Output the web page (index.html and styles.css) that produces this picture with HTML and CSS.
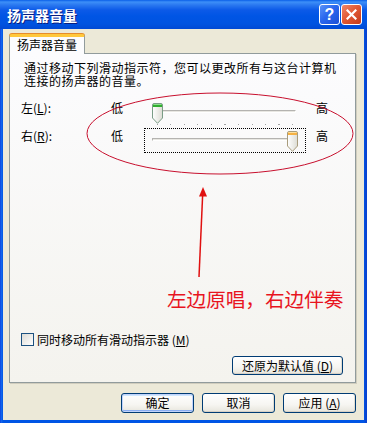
FILE: index.html
```html
<!DOCTYPE html>
<html lang="zh-CN">
<head>
<meta charset="utf-8">
<title>扬声器音量</title>
<link rel="stylesheet" href="styles.css">
</head>
<body>
<div class="window">
  <div class="titlebar">
    <span class="title">扬声器音量</span>
    <div class="tb-buttons">
      <span class="tb-btn help">?</span>
      <span class="tb-btn close">
        <svg width="11" height="11" viewBox="0 0 11 11"><path d="M1.5 1.5 L9.5 9.5 M9.5 1.5 L1.5 9.5" stroke="#fff" stroke-width="2.2" stroke-linecap="square"/></svg>
      </span>
    </div>
  </div>
  <div class="client">
    <div class="tabs"><div class="tab">扬声器音量</div></div>
    <div class="panel">
      <p class="desc">通过移动下列滑动指示符，您可以更改所有与这台计算机<br>连接的扬声器的音量。</p>
      <div class="rows">
        <div class="row">
          <span class="lbl">左(<u>L</u>):</span>
          <span class="low">低</span>
          <div class="slider">
            <div class="track"></div>
            <div class="ticks"></div>
            <svg class="thumb thumb-left" width="11" height="21" viewBox="0 0 11 21">
              <defs><linearGradient id="tg1" x1="0" y1="0" x2="1" y2="0"><stop offset="0" stop-color="#FFFFFF"/><stop offset="1" stop-color="#DCDCD4"/></linearGradient></defs>
              <path d="M0.5 2 Q0.5 0.5 2 0.5 H9 Q10.5 0.5 10.5 2 V15 L5.5 20.3 L0.5 15 Z" fill="url(#tg1)" stroke="#7A9C86"/>
              <path d="M1 2 Q1 1 2 1 H9 Q10 1 10 2 V4 H1 Z" fill="#2FAE2F"/>
              <path d="M1.5 1.5 H9.5" stroke="#8EE08E"/>
            </svg>
          </div>
          <span class="high">高</span>
        </div>
        <div class="row">
          <span class="lbl">右(<u>R</u>):</span>
          <span class="low">低</span>
          <div class="slider focus">
            <div class="track"></div>
            <svg class="thumb thumb-right" width="11" height="21" viewBox="0 0 11 21">
              <defs><linearGradient id="tg2" x1="0" y1="0" x2="1" y2="0"><stop offset="0" stop-color="#FFFFFF"/><stop offset="1" stop-color="#DCDCD4"/></linearGradient></defs>
              <path d="M0.5 2 Q0.5 0.5 2 0.5 H9 Q10.5 0.5 10.5 2 V15 L5.5 20.3 L0.5 15 Z" fill="url(#tg2)" stroke="#A89C7C"/>
              <path d="M1 2 Q1 1 2 1 H9 Q10 1 10 2 V4 H1 Z" fill="#F5B143"/>
              <path d="M1.5 1.5 H9.5" stroke="#FCE0A0"/>
            </svg>
          </div>
          <span class="high">高</span>
        </div>
      </div>
      <label class="check"><span class="box"></span><span>同时移动所有滑动指示器 (<u>M</u>)</span></label>
      <div class="restore-row"><span class="btn restore">还原为默认值 (<u>D</u>)</span></div>

      <svg class="annot" width="345" height="328" viewBox="0 0 345 328">
        <ellipse cx="210" cy="79.5" rx="133" ry="40.5" fill="none" stroke="#C8102E" stroke-width="1"/>
        <path d="M189 223 L192.6 142" stroke="#E01010" stroke-width="1.5" fill="none"/>
        <path d="M193 133 L189 142.5 L197 142.5 Z" fill="#E01010"/>
      </svg>
      <div class="annot-text">左边原唱，右边伴奏</div>
    </div>
    <div class="footer">
      <span class="btn default">确定</span>
      <span class="btn">取消</span>
      <span class="btn">应用 (<u>A</u>)</span>
    </div>
  </div>
</div>
</body>
</html>
```
FILE: styles.css
```css
* { box-sizing: border-box; margin: 0; padding: 0; }
html, body { width: 367px; height: 423px; overflow: hidden; }
body {
  font-family: "Noto Sans CJK SC", "Liberation Sans", sans-serif;
  font-size: 12px;
  color: #000;
  background: #fff;
}
u { text-decoration: underline; text-underline-offset: 1px; }

.window {
  width: 367px;
  height: 423px;
  display: flex;
  flex-direction: column;
  background: linear-gradient(to right, #0831D9 0, #166AEE 1px, #0055E5 3px, #0055E5 364px, #0842D0 366px);
}

.titlebar {
  height: 29px;
  display: flex;
  align-items: center;
  padding: 0 5px 0 7px;
  background: linear-gradient(#0A5FE8 0, #3D8FF8 2px, #2A78F0 5px, #0C5AE8 10px, #0055E5 16px, #0053E0 24px, #0049D4 29px);
}
.title {
  flex: 1;
  color: #fff;
  font-weight: bold;
  font-size: 14px;
  line-height: 16px;
  text-shadow: 1px 1px 0 #0A1E80;
  padding-top: 1px;
}
.tb-buttons { display: flex; gap: 1px; }
.tb-btn {
  width: 21px;
  height: 21px;
  border: 1px solid #fff;
  border-radius: 3px;
  display: flex;
  align-items: center;
  justify-content: center;
}
.help {
  background: linear-gradient(135deg, #5A93F8 0%, #2A67EE 45%, #1A4FD6 100%);
  color: #fff;
  font-family: "Liberation Sans", sans-serif;
  font-weight: bold;
  font-size: 16px;
  line-height: 16px;
}
.close {
  background: linear-gradient(135deg, #F0876A 0%, #E25A35 45%, #C4391A 100%);
}

.client {
  flex: 1;
  margin: 0 3px 3px 3px;
  background: #ECE9D8;
  display: flex;
  flex-direction: column;
}

.tabs {
  height: 24px;
  padding: 5px 0 0 6px;
  display: flex;
}
.tab {
  position: relative;
  z-index: 1;
  width: 76px;
  height: 20px;
  background: #FCFCFE;
  border: 1px solid #919B9C;
  border-top: 3px solid #FFC83C;
  border-bottom: none;
  border-radius: 3px 3px 0 0;
  box-shadow: 0 -1px 0 #E68B2C;
  padding-left: 7px;
  line-height: 16px;
}

.panel {
  position: relative;
  margin-left: 6px;
  width: 347px;
  height: 330px;
  border: 1px solid #919B9C;
  background: linear-gradient(#FCFCFE, #F4F3EE);
  box-shadow: 1px 1px 0 #D0CDBE;
  display: flex;
  flex-direction: column;
  padding-left: 11px;
}

.desc {
  margin: 7px 0 0 3px;
  white-space: nowrap;
  line-height: 13px;
  letter-spacing: 0.5px;
}

.rows { margin-top: 13px; display: flex; flex-direction: column; }
.row { display: flex; height: 28px; align-items: flex-start; }
.lbl { width: 90px; line-height: 16px; }
.low { width: 33px; line-height: 16px; }
.high { margin-left: 10px; line-height: 16px; }

.slider { position: relative; width: 162px; height: 25px; }
.slider.focus { border: 1px dotted #000; }
.track {
  position: absolute;
  left: 8px;
  top: 10px;
  width: 144px;
  height: 3px;
  border: 1px solid #B4B3B0;
  border-right-color: #fff;
  border-bottom-color: #fff;
  background: #E8E7E2;
}
.focus .track { left: 7px; top: 9px; }
.ticks {
  position: absolute;
  left: 13px;
  top: 24px;
  width: 137px;
  height: 1px;
  background: repeating-linear-gradient(to right, #A5A5A5 0 1px, transparent 1px 13.5px);
}
.thumb { position: absolute; top: 3px; }
.thumb-left { left: 8px; }
.thumb-right { left: 142px; top: 2px; }

.check {
  margin-top: auto;
  height: 17px;
  display: flex;
  align-items: center;
  gap: 3px;
  line-height: 16px;
}
.box {
  width: 13px;
  height: 13px;
  border: 1px solid #1C5180;
  background: linear-gradient(135deg, #DCDBD5, #FFFFFF);
}

.restore-row {
  margin-top: 8px;
  margin-bottom: 7px;
  display: flex;
  justify-content: flex-end;
  padding-right: 12px;
}

.btn {
  height: 19px;
  border: 1px solid #003C74;
  border-radius: 3px;
  background: linear-gradient(#FFFFFF 0%, #F6F5F1 60%, #E7E5DC 100%);
  box-shadow: inset 0 -1px 0 #D6D0C5, inset -1px 0 0 #E0DDD2;
  display: flex;
  align-items: center;
  justify-content: center;
  line-height: 16px;
}
.restore { width: 111px; }

.annot { position: absolute; left: 0; top: 0; pointer-events: none; }
.annot-text {
  position: absolute;
  left: 157px;
  top: 233px;
  font-size: 19.6px;
  line-height: 24px;
  color: #E8141E;
  white-space: nowrap;
}

.footer {
  margin-top: 10px;
  padding-right: 8px;
  display: flex;
  justify-content: flex-end;
  gap: 8px;
}
.footer .btn { width: 73px; height: 20px; }
.footer .btn.default {
  box-shadow: inset 0 0 0 1px #C1D3FB, inset 0 -2px 0 #89ADF2, inset 0 2px 0 #CEE7FF;
}
```
